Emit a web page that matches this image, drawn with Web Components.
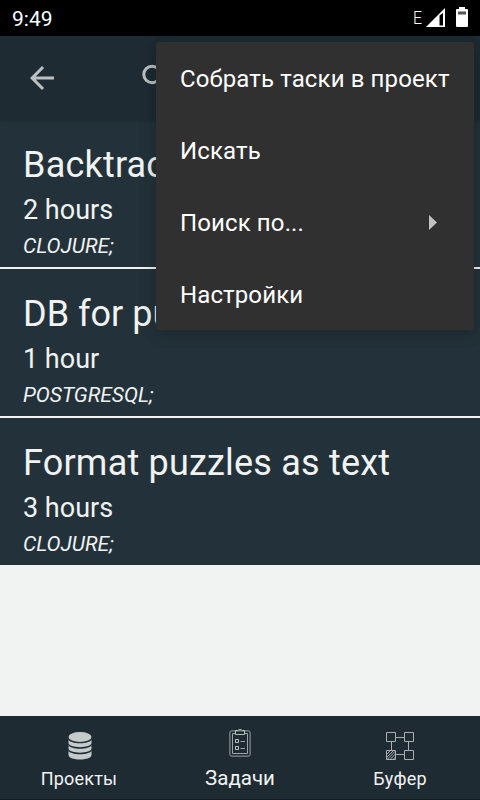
<!DOCTYPE html>
<html lang="ru"><head><meta charset="utf-8"><title>Задачи</title>
<style>html,body{margin:0;height:100%;overflow:hidden}body{font-family:Roboto,sans-serif;background:#f1f3f2}</style></head>
<body><task-screen></task-screen>
<script>
const define=(name,html)=>customElements.define(name,class extends HTMLElement{
  constructor(){super();const t=document.createElement('template');t.innerHTML=html;
    this.attachShadow({mode:'open'}).append(t.content.cloneNode(true));}
});
define('status-bar',`<style>
:host{display:flex;height:36px;background:#000;color:#fff;align-items:center;justify-content:space-between;padding:0 0 0 12px;box-sizing:border-box}
.time{font-size:21px;line-height:36px;padding-top:2px}
.right{display:flex;align-items:center;height:36px}
.net{font-size:18px;font-weight:300;line-height:36px;width:13px;transform:scaleX(.88);transform-origin:0 0}
svg{display:block}
</style><span class="time">9:49</span>
<div class="right"><span class="net">E</span>
<svg width="54" height="36" viewBox="0 0 54 36"><path fill-rule="evenodd" d="M0 27L19 8V27ZM13.500 15.500V25.500H17V13Z" fill="#fff"/><path d="M33 7h6v2h2q1 0 1 1v16q0 1-1 1H31q-1 0-1-1V10q0-1 1-1h2z" fill="#fff"/><path d="M32 11.500h8v3h-8z" fill="#555"/></svg></div>`);
define('app-bar',`<style>
:host{display:flex;height:84px;background:#1e2b32;position:relative;align-items:center;box-shadow:0 1px 4px #0003;z-index:1}
svg{display:block}.back{margin-left:24px}.search{margin-left:76px}
</style>
<svg class="back" width="36" height="36" viewBox="0 0 24 24"><path d="M20 11H7.830l5.590-5.590L12 4l-8 8 8 8 1.410-1.410L7.830 13H20z" fill="#bcc0c2"/></svg>
<svg class="search" width="36" height="36" viewBox="0 0 24 24"><path transform="translate(1.200 .1)" d="M15.500 14h-.79l-.28-.27A6.470 6.470 0 0 0 16 9.500 6.500 6.500 0 1 0 9.500 16c1.610 0 3.090-.59 4.230-1.570l.27.28v.79l5 4.990L20.490 19zm-6 0a4.500 4.500 0 1 1 0-9 4.500 4.500 0 0 1 0 9z" fill="#bcc0c2"/></svg>`);
define('task-row',`<style>
:host{display:block;height:147px;background:#23323a;color:#f1f3f2;padding:24px 23px 0;box-sizing:border-box;white-space:nowrap}
:host(:not(:last-of-type)){border-bottom:2px solid #f1f3f2;height:149px}
.title{font-size:36px;line-height:42px;letter-spacing:var(--tracking,.2px)}.time{font-size:27px;line-height:32px;margin-top:8px}
.tags{font-size:21px;line-height:25px;margin-top:8px;font-style:italic}
</style><div class="title"><slot></slot></div><div class="time"><slot name="time"></slot></div><div class="tags"><slot name="tags"></slot></div>`);
define('menu-item',`<style>
:host{display:flex;height:72px;align-items:center;justify-content:space-between;padding:2px 37px 0 24px;box-sizing:border-box;font-size:24px;line-height:28px;letter-spacing:.12px;color:#fff;white-space:nowrap}
</style><span><slot></slot></span><slot name="arrow"></slot>`);
define('overflow-menu',`<style>
:host{display:block;position:absolute;z-index:5;left:156px;top:42px;width:318px;height:288px;background:#303030;border-radius:3px;box-shadow:0 6px 14px #0002,0 0 20px #0002}
svg{display:block;margin-top:-2px}
</style><menu-item>Собрать таски в проект</menu-item><menu-item>Искать</menu-item>
<menu-item>Поиск по...<svg slot="arrow" width="8" height="15" viewBox="0 0 8 15"><path d="M0 0l8 7.500L0 15z" fill="#c1c1c1"/></svg></menu-item><menu-item>Настройки</menu-item>`);
define('nav-item',`<style>
:host{display:flex;flex:1;flex-direction:column;align-items:center;color:#f1f3f2;font-size:18px;line-height:22px;padding-top:12px}
.label{margin-top:4px;letter-spacing:.2px;padding-right:2px}
:host(:last-of-type) .label{padding-right:0}
:host([active]){font-size:20.500px;padding-top:9px}
:host([active]) .label{margin-top:6px;letter-spacing:0;padding-right:0}
</style><slot name="icon"></slot><span class="label"><slot></slot></span>`);
define('bottom-nav',`<style>
:host{display:flex;height:84px;background:#1e2b32;border-bottom:1px solid #1b1625;box-sizing:border-box}svg{display:block}
</style>
<nav-item><svg slot="icon" width="36" height="36" viewBox="0 0 36 36"><g fill="#c5cbcb"><ellipse cx="18" cy="9" rx="11.500" ry="5"/><path d="M6.500 11.500C8 16.500 28 16.500 29.500 11.500V15C29.500 20.500 6.500 20.500 6.500 15z"/><path d="M6.500 17C8 22 28 22 29.500 17V20.500C29.500 26 6.500 26 6.500 20.500z"/><path d="M6.500 22.500C8 27.500 28 27.500 29.500 22.500V27C29.500 33 6.500 33 6.500 27z"/></g></svg>Проекты</nav-item>
<nav-item active><svg slot="icon" width="36" height="36" viewBox="0 0 36 36"><g fill="none" stroke="#9da4a7"><rect x="7.900" y="5.900" width="20.200" height="25.200" rx="1.500"/><path d="M13 8.500H10.500V28.500H25.500V8.500H23"/><path d="M13.500 9.500V5.500H16Q16 4.500 18 4.500T20 5.500H22.500V9.500Z" stroke="#b9bec0"/><path d="M13.500 14.500h3v3h-3zM13.500 21.500h3v3h-3z" stroke="#bcc1c3"/><path d="M18.500 16.500h4.500M18.500 23.500h4.500"/></g></svg>Задачи</nav-item>
<nav-item><svg slot="icon" width="36" height="36" viewBox="0 0 36 36"><g fill="none" stroke="#a9afb1"><path d="M4.500 4.500h9v9h-9zM22.500 4.500h9v9h-9zM22.500 22.500h9v9h-9zM4.500 22.500h9v9h-9zM13.500 9.500h9M9.500 13.500v9M26.500 13.500v9M13.500 26.500h9"/><path d="M5 26l3.500-3.500M5 29l6.500-6.500M5 31.500l8.500-8.500M8 31.500l5.500-5.500M11 31.500l2.500-2.500"/></g></svg>Буфер</nav-item>`);
define('task-screen',`<style>
:host{display:flex;flex-direction:column;width:480px;height:800px;position:relative;background:#f1f3f2;overflow:hidden}
main{flex:1}
.tight{--tracking:0px}
</style><status-bar></status-bar><app-bar></app-bar>
<main><task-row>Backtrac<span slot="time">2 hours</span><span slot="tags">CLOJURE;</span></task-row>
<task-row class="tight">DB for pu<span slot="time">1 hour</span><span slot="tags">POSTGRESQL;</span></task-row>
<task-row>Format puzzles as text<span slot="time">3 hours</span><span slot="tags">CLOJURE;</span></task-row></main>
<bottom-nav></bottom-nav><overflow-menu></overflow-menu>`);
</script></body></html>
